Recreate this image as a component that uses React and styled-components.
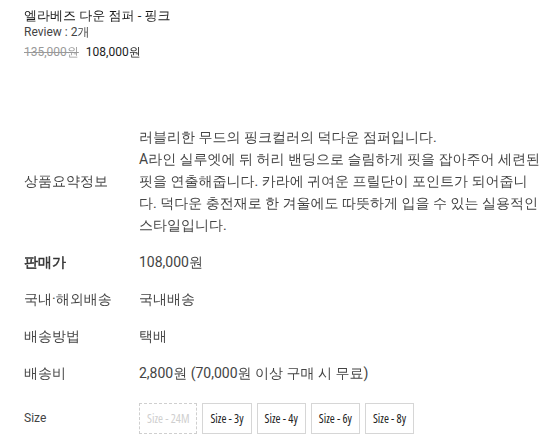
import React from "react";
import styled, { createGlobalStyle } from "styled-components";

const base = `Roboto, "WenQuanYi Zen Hei", "Noto Sans CJK KR", sans-serif`;

const GlobalStyle = createGlobalStyle`
  html, body {
    margin: 0;
    padding: 0;
    background: #fff;
  }
  body {
    font-family: ${base};
    color: #333;
  }
`;

const Page = styled.div`
  width: 552px;
  height: 445px;
  box-sizing: border-box;
  padding: 6px 10px 0 24px;
  overflow: hidden;
`;

const Header = styled.div`
  display: flex;
  flex-direction: column;
  margin-bottom: 56px;
`;

const Title = styled.h1`
  margin: 0;
  font-size: 13px;
  line-height: 20px;
  font-weight: 400;
  color: #1a1a1a;
`;

const Review = styled.div`
  font-size: 12px;
  line-height: 12px;
  color: #444;
`;

const PriceLine = styled.div`
  margin-top: 4px;
  display: flex;
  align-items: center;
  gap: 7px;
  font-size: 12px;
  line-height: 20px;
`;

const OldPrice = styled.span`
  color: #999;
  text-decoration: line-through;
`;

const NewPrice = styled.span`
  color: #222;
`;

const Table = styled.div`
  display: flex;
  flex-direction: column;
`;

const Row = styled.div`
  display: grid;
  grid-template-columns: 115px 403px;
  align-items: center;
  padding: ${(p) => (p.$loose ? "11px 0" : "8px 0")};
`;

const Label = styled.div`
  font-size: ${(p) => (p.$small ? "12px" : "14px")};
  line-height: 21px;
  color: ${(p) => (p.$bold ? "#333" : "#444")};
  font-weight: ${(p) => (p.$bold ? 700 : 400)};
  -webkit-text-stroke: ${(p) => (p.$bold ? "0.5px #333" : "0")};
`;

const Value = styled.div`
  font-size: 14px;
  line-height: 21px;
  color: #444;
`;

const Summary = styled.div`
  font-size: 14px;
  line-height: 22px;
  color: #444;
  word-break: break-all;
`;

const Sizes = styled.div`
  display: flex;
  gap: 5px;
`;

const SizeButton = styled.button`
  height: 31px;
  box-sizing: border-box;
  padding: 0 7px;
  background: #fff;
  border: 1px ${(p) => (p.disabled ? "dashed #cfcfcf" : "solid #d6d6d6")};
  color: ${(p) => (p.disabled ? "#cfcfcf" : "#222")};
  font-family: "Open Sans", Roboto, sans-serif;
  font-stretch: 75%;
  font-size: 12px;
  font-weight: 500;
  cursor: ${(p) => (p.disabled ? "default" : "pointer")};
`;

const sizes = [
  { name: "Size - 24M", soldOut: true },
  { name: "Size - 3y" },
  { name: "Size - 4y" },
  { name: "Size - 6y" },
  { name: "Size - 8y" },
];

export default function App() {
  return (
    <Page>
      <GlobalStyle />
      <Header>
        <Title>엘라베즈 다운 점퍼 - 핑크</Title>
        <Review>Review : 2개</Review>
        <PriceLine>
          <OldPrice>135,000원</OldPrice>
          <NewPrice>108,000원</NewPrice>
        </PriceLine>
      </Header>
      <Table>
        <Row>
          <Label>상품요약정보</Label>
          <Summary>
            러블리한 무드의 핑크컬러의 덕다운 점퍼입니다.
            <br />
            A라인 실루엣에 뒤 허리 밴딩으로 슬림하게 핏을 잡아주어 세련된 핏을
            연출해줍니다. 카라에 귀여운 프릴단이 포인트가 되어줍니다. 덕다운
            충전재로 한 겨울에도 따뜻하게 입을 수 있는 실용적인 스타일입니다.
          </Summary>
        </Row>
        <Row>
          <Label $bold>판매가</Label>
          <Value>108,000원</Value>
        </Row>
        <Row>
          <Label>국내·해외배송</Label>
          <Value>국내배송</Value>
        </Row>
        <Row>
          <Label>배송방법</Label>
          <Value>택배</Value>
        </Row>
        <Row>
          <Label>배송비</Label>
          <Value>2,800원 (70,000원 이상 구매 시 무료)</Value>
        </Row>
        <Row $loose>
          <Label $small>Size</Label>
          <Sizes>
            {sizes.map((s) => (
              <SizeButton key={s.name} disabled={s.soldOut}>
                {s.name}
              </SizeButton>
            ))}
          </Sizes>
        </Row>
      </Table>
    </Page>
  );
}
